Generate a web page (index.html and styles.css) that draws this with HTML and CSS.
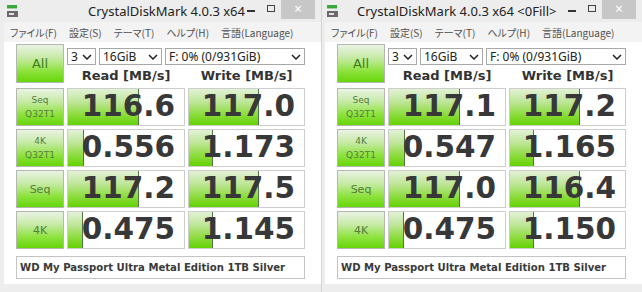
FILE: index.html
```html
<!DOCTYPE html>
<html lang="ja">
<head>
<meta charset="utf-8">
<title>CrystalDiskMark</title>
<link rel="stylesheet" href="styles.css">
</head>
<body>
<div class="desk">
  <div class="win win-a">
    <div class="titlebar">
      <svg class="appicon" width="11" height="13" viewBox="0 0 11 13"><rect x="0" y="0" width="10" height="3" fill="#36a93a"/><rect x="0" y="3" width="10" height="1" fill="#9bd39b"/><rect x="0" y="6" width="11" height="6" fill="#6a6a6a"/><rect x="2" y="8" width="5" height="2" fill="#e2e2e2"/></svg>
      <span class="title">CrystalDiskMark 4.0.3 x64</span>
      <div class="ctrls"><span class="min"></span><span class="max"></span><span class="close">×</span></div>
    </div>
    <div class="frame">
      <div class="menubar"><span>ファイル(F)</span><span>設定(S)</span><span>テーマ(T)</span><span>ヘルプ(H)</span><span>言語(Language)</span></div>
      <div class="client">
        <div class="top">
          <div class="btn all">All</div>
          <div class="selects">
            <div class="sel sel-n"><span>3</span><svg width="10" height="6" viewBox="0 0 10 6"><polyline points="1,1 5,5 9,1" fill="none" stroke="#222" stroke-width="1.5"/></svg></div>
            <div class="sel sel-s"><span>16GiB</span><svg width="10" height="6" viewBox="0 0 10 6"><polyline points="1,1 5,5 9,1" fill="none" stroke="#222" stroke-width="1.5"/></svg></div>
            <div class="sel sel-d"><span>F: 0% (0/931GiB)</span><svg width="10" height="6" viewBox="0 0 10 6"><polyline points="1,1 5,5 9,1" fill="none" stroke="#222" stroke-width="1.5"/></svg></div>
          </div>
          <div class="hdr">Read [MB/s]</div>
          <div class="hdr">Write [MB/s]</div>
        </div>
        <div class="rows">
          <div class="btn lbl two">Seq<br>Q32T1</div>
          <div class="cell"><div class="bar" style="width:61%"></div><div class="num">116.6</div></div>
          <div class="cell"><div class="bar" style="width:61%"></div><div class="num">117.0</div></div>
          <div class="btn lbl two">4K<br>Q32T1</div>
          <div class="cell"><div class="bar" style="width:14%"></div><div class="num">0.556</div></div>
          <div class="cell"><div class="bar" style="width:21%"></div><div class="num">1.173</div></div>
          <div class="btn lbl one">Seq</div>
          <div class="cell"><div class="bar" style="width:61%"></div><div class="num">117.2</div></div>
          <div class="cell"><div class="bar" style="width:61%"></div><div class="num">117.5</div></div>
          <div class="btn lbl one">4K</div>
          <div class="cell"><div class="bar" style="width:13%"></div><div class="num">0.475</div></div>
          <div class="cell"><div class="bar" style="width:21%"></div><div class="num">1.145</div></div>
        </div>
        <div class="name">WD My Passport Ultra Metal Edition 1TB Silver</div>
      </div>
    </div>
  </div>
  <div class="win win-b">
    <div class="titlebar">
      <svg class="appicon" width="11" height="13" viewBox="0 0 11 13"><rect x="0" y="0" width="10" height="3" fill="#36a93a"/><rect x="0" y="3" width="10" height="1" fill="#9bd39b"/><rect x="0" y="6" width="11" height="6" fill="#6a6a6a"/><rect x="2" y="8" width="5" height="2" fill="#e2e2e2"/></svg>
      <span class="title">CrystalDiskMark 4.0.3 x64 &lt;0Fill&gt;</span>
      <div class="ctrls"><span class="min"></span><span class="max"></span><span class="close">×</span></div>
    </div>
    <div class="frame">
      <div class="menubar"><span>ファイル(F)</span><span>設定(S)</span><span>テーマ(T)</span><span>ヘルプ(H)</span><span>言語(Language)</span></div>
      <div class="client">
        <div class="top">
          <div class="btn all">All</div>
          <div class="selects">
            <div class="sel sel-n"><span>3</span><svg width="10" height="6" viewBox="0 0 10 6"><polyline points="1,1 5,5 9,1" fill="none" stroke="#222" stroke-width="1.5"/></svg></div>
            <div class="sel sel-s"><span>16GiB</span><svg width="10" height="6" viewBox="0 0 10 6"><polyline points="1,1 5,5 9,1" fill="none" stroke="#222" stroke-width="1.5"/></svg></div>
            <div class="sel sel-d"><span>F: 0% (0/931GiB)</span><svg width="10" height="6" viewBox="0 0 10 6"><polyline points="1,1 5,5 9,1" fill="none" stroke="#222" stroke-width="1.5"/></svg></div>
          </div>
          <div class="hdr">Read [MB/s]</div>
          <div class="hdr">Write [MB/s]</div>
        </div>
        <div class="rows">
          <div class="btn lbl two">Seq<br>Q32T1</div>
          <div class="cell"><div class="bar" style="width:61%"></div><div class="num">117.1</div></div>
          <div class="cell"><div class="bar" style="width:61%"></div><div class="num">117.2</div></div>
          <div class="btn lbl two">4K<br>Q32T1</div>
          <div class="cell"><div class="bar" style="width:14%"></div><div class="num">0.547</div></div>
          <div class="cell"><div class="bar" style="width:21%"></div><div class="num">1.165</div></div>
          <div class="btn lbl one">Seq</div>
          <div class="cell"><div class="bar" style="width:61%"></div><div class="num">117.0</div></div>
          <div class="cell"><div class="bar" style="width:61%"></div><div class="num">116.4</div></div>
          <div class="btn lbl one">4K</div>
          <div class="cell"><div class="bar" style="width:13%"></div><div class="num">0.475</div></div>
          <div class="cell"><div class="bar" style="width:21%"></div><div class="num">1.150</div></div>
        </div>
        <div class="name">WD My Passport Ultra Metal Edition 1TB Silver</div>
      </div>
    </div>
  </div>
</div>
</body>
</html>
```
FILE: styles.css
```css
* { box-sizing: border-box; }
html, body { margin: 0; padding: 0; }
body {
  width: 642px;
  height: 292px;
  overflow: hidden;
  background: #e9e9e9;
  font-family: "Noto Sans", "DejaVu Sans", sans-serif;
}
.desk { display: flex; height: 292px; }
.win {
  width: 321px;
  height: 292px;
  display: flex;
  flex-direction: column;
  background: #ededed;
}
.win-b { border-left: 1px solid #d2d2d2; }

.titlebar {
  height: 22px;
  display: flex;
  align-items: center;
}
.appicon { flex: none; margin-left: 7px; }
.win-b .appicon { margin-left: 5px; }
.title {
  font-size: 13px;
  color: #222;
  white-space: nowrap;
  margin-left: 70px;
}
.win-b .title { margin-left: 19px; }
.ctrls {
  margin-left: auto;
  margin-right: 6px;
  align-self: flex-start;
  display: flex;
  align-items: flex-start;
}
.min {
  width: 8px;
  height: 2px;
  background: #333;
  margin-top: 10px;
  margin-right: 12px;
}
.max {
  width: 8px;
  height: 7px;
  border: 1px solid #444;
  margin-top: 5px;
  margin-right: 6px;
}
.close {
  width: 34px;
  height: 19px;
  background: #c7c7c7;
  color: #fff;
  font-size: 14px;
  line-height: 18px;
  text-align: center;
}

.frame {
  flex: 1;
  display: flex;
  flex-direction: column;
  padding: 0 0 8px 4px;
}
.win-b .frame { padding-left: 3px; }

.menubar {
  height: 20px;
  display: flex;
  align-items: center;
  padding-left: 6px;
  gap: 12px;
  background: #f3f3f3;
  font-family: "Noto Sans CJK JP", "Noto Sans", sans-serif;
  font-size: 10px;
  font-feature-settings: "palt";
  color: #505050;
}

.client {
  flex: 1;
  background: #fff;
  padding: 2px 0 0 12px;
}

.top {
  display: grid;
  grid-template-columns: 48px 118px 117px;
  grid-template-rows: 22px 17px;
  column-gap: 3px;
}
.btn {
  border: 1px solid #b4b8b0;
  background: linear-gradient(to bottom, #eaf3e4 0%, #c6eaa6 35%, #8ee23e 70%, #66d60a 100%);
  color: #4a7d2c;
  display: flex;
  align-items: center;
  justify-content: center;
  text-align: center;
}
.all {
  grid-row: 1 / 3;
  font-family: "DejaVu Sans", sans-serif;
  font-size: 13px;
  color: #3f7d1c;
}
.selects {
  grid-column: 2 / 4;
  display: flex;
  gap: 3px;
  padding-top: 4px;
}
.sel {
  height: 17px;
  border: 1px solid #a8a8a8;
  background: #fff;
  display: flex;
  align-items: center;
  justify-content: space-between;
  padding: 0 3px 0 3px;
  font-size: 12px;
  color: #222;
}
.sel-n { width: 29px; }
.sel-s { width: 63px; }
.sel-d { width: 140px; }
.hdr {
  font-family: "DejaVu Sans", sans-serif;
  font-weight: bold;
  font-size: 13px;
  color: #333;
  text-align: center;
  line-height: 17px;
  padding-top: 1px;
}

.rows {
  display: grid;
  grid-template-columns: 48px 118px 117px;
  grid-auto-rows: 38px;
  gap: 3px;
  margin-top: 5px;
}
.lbl {
  font-family: "DejaVu Sans", sans-serif;
  color: #567d3c;
}
.lbl.two { font-size: 9px; line-height: 14px; }
.lbl.one { font-size: 11px; }

.cell {
  border: 1px solid #cdcdcd;
  background: #fff;
  display: grid;
}
.bar {
  grid-area: 1 / 1;
  height: 100%;
  background: linear-gradient(to bottom, #e2f2d6 0%, #bfe69a 35%, #8edc40 70%, #64d204 100%);
  box-shadow: inset -1px 0 0 #56744a;
}
.num {
  grid-area: 1 / 1;
  align-self: center;
  justify-self: end;
  padding-right: 9px;
  font-family: "DejaVu Sans", sans-serif;
  font-weight: bold;
  font-size: 29.5px;
  line-height: 1;
  color: #383838;
}

.name {
  margin-top: 7px;
  width: 289px;
  height: 23px;
  border: 1px solid #c4c4c4;
  background: #fff;
  display: flex;
  align-items: center;
  padding-left: 3px;
  font-family: "DejaVu Sans", sans-serif;
  font-weight: bold;
  font-size: 10.1px;
  color: #3a3a3a;
  white-space: nowrap;
}
```
